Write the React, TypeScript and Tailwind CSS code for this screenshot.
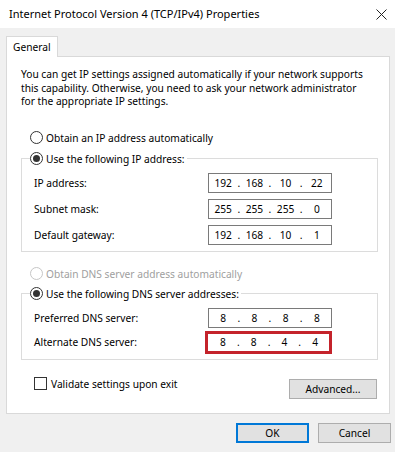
import React from 'react';

function Radio({ checked, disabled }: { checked?: boolean; disabled?: boolean }) {
  return (
    <span
      className={`flex h-[13px] w-[13px] shrink-0 items-center justify-center rounded-full border bg-white ${
        disabled ? 'border-[#c6c6c6]' : 'border-[#333333]'
      }`}
    >
      {checked && <span className="h-[7px] w-[7px] rounded-full bg-[#333333]" />}
    </span>
  );
}

function IpBox({ parts, highlight }: { parts: string[]; highlight?: boolean }) {
  return (
    <div
      className={`flex items-center bg-white ${
        highlight
          ? 'h-[23px] w-[127px] border-[3px] border-[#c4232b] pl-[1px]'
          : 'h-[20px] w-[124px] border border-[#7a7a7a]'
      }`}
    >
      {parts.map((p, i) => (
        <React.Fragment key={i}>
          {i > 0 && <span className="w-[3px] text-center">.</span>}
          <span className="w-[29px] text-center">{p}</span>
        </React.Fragment>
      ))}
    </div>
  );
}

function Row({ label, children }: { label: string; children: React.ReactNode }) {
  return (
    <div className="flex items-center justify-between">
      <span>{label}</span>
      {children}
    </div>
  );
}

export default function App() {
  return (
    <div className="h-[452px] w-[395px] overflow-hidden bg-[#f0f0f0] font-['Noto_Sans',sans-serif] text-[10.2px] leading-[14px] text-black">
      {/* title bar */}
      <div className="flex h-[28px] items-center justify-between bg-white pl-[9px] pr-[7px]">
        <span className="text-[11px]">Internet Protocol Version 4 (TCP/IPv4) Properties</span>
        <svg width="11" height="11" viewBox="0 0 11 11" className="mr-[1px]">
          <path d="M0.5 0.5 L10.5 10.5 M10.5 0.5 L0.5 10.5" stroke="#222" strokeWidth="1" />
        </svg>
      </div>

      <div className="px-[6px] pt-[8px]">
        {/* tab */}
        <div className="relative z-10 -mb-[1px] flex h-[21px] w-[52px] items-center border border-b-0 border-[#d9d9d9] bg-white pl-[6px]">
          General
        </div>

        {/* panel */}
        <div className="w-[384px] border border-[#d9d9d9] bg-white pb-[14px]">
          <p className="whitespace-nowrap pl-[14px] pt-[11px] leading-[13.5px]">
            You can get IP settings assigned automatically if your network supports
            <br />
            this capability. Otherwise, you need to ask your network administrator
            <br />
            for the appropriate IP settings.
          </p>

          <div className="ml-[23px] mt-[22px] flex items-center gap-[3px]">
            <Radio />
            <span>Obtain an IP address automatically</span>
          </div>

          <fieldset className="ml-[14px] mr-[11px] mt-[7px] border border-[#dcdcdc] px-0 pb-[6px]">
            <legend className="ml-[8px] flex items-center gap-[3px] bg-white pr-[2px]">
              <Radio checked />
              <span>Use the following IP address:</span>
            </legend>
            <div className="mt-[7px] flex flex-col gap-[6px] pl-[12px] pr-[45px]">
              <Row label="IP address:">
                <IpBox parts={['192', '168', '10', '22']} />
              </Row>
              <Row label="Subnet mask:">
                <IpBox parts={['255', '255', '255', '0']} />
              </Row>
              <Row label="Default gateway:">
                <IpBox parts={['192', '168', '10', '1']} />
              </Row>
            </div>
          </fieldset>

          <div className="ml-[23px] mt-[15px] flex items-center gap-[3px] text-[#a0a0a0]">
            <Radio disabled />
            <span>Obtain DNS server address automatically</span>
          </div>

          <fieldset className="ml-[14px] mr-[11px] mt-[6px] border border-[#dcdcdc] px-0 pb-[5px]">
            <legend className="ml-[8px] flex items-center gap-[3px] bg-white pr-[2px]">
              <Radio checked />
              <span>Use the following DNS server addresses:</span>
            </legend>
            <div className="mt-[7px] flex flex-col gap-[3px] pl-[12px] pr-[45px]">
              <Row label="Preferred DNS server:">
                <IpBox parts={['8', '8', '8', '8']} />
              </Row>
              <Row label="Alternate DNS server:">
                <IpBox parts={['8', '8', '4', '4']} highlight />
              </Row>
            </div>
          </fieldset>

          <div className="ml-[27px] mr-[12px] flex items-start justify-between">
            <div className="mt-[17px] flex items-center gap-[4px]">
              <span className="h-[13px] w-[13px] border border-[#333333] bg-white" />
              <span>Validate settings upon exit</span>
            </div>
            <button className="mt-[19px] h-[20px] w-[88px] border border-[#adadad] bg-[#e1e1e1]">
              Advanced...
            </button>
          </div>
        </div>

        {/* dialog buttons */}
        <div className="mr-[-2px] mt-[9px] flex justify-end gap-[9px]">
          <button className="h-[20px] w-[73px] border-2 border-[#0078d7] bg-[#e1e1e1]">OK</button>
          <button className="h-[20px] w-[73px] border border-[#adadad] bg-[#e1e1e1]">Cancel</button>
        </div>
      </div>
    </div>
  );
}
